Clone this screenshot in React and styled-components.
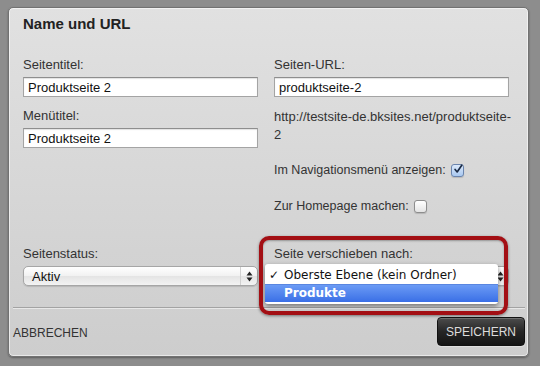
import styled, { createGlobalStyle } from "styled-components";

const GlobalStyle = createGlobalStyle`
  body {
    margin: 0;
    background-color: #8d8d8d;
    font-family: "Liberation Sans", Arial, sans-serif;
  }
`;

export default function App() {
  return (
    <Page>
      <GlobalStyle />
      <Dialog>
        <Body>
          <Title>Name und URL</Title>

          <Columns>
            <Column>
              <Field>
                <Label>Seitentitel:</Label>
                <TextInput defaultValue="Produktseite 2" />
              </Field>
              <Field>
                <Label>Menütitel:</Label>
                <TextInput defaultValue="Produktseite 2" />
              </Field>
            </Column>

            <Column>
              <Field>
                <Label>Seiten-URL:</Label>
                <TextInput defaultValue="produktseite-2" />
              </Field>
              <UrlText>http://testsite-de.bksites.net/produktseite-2</UrlText>
              <CheckRow>
                Im Navigationsmenü anzeigen:
                <CheckBox checked>
                  <svg width="12" height="12" viewBox="0 0 12 12">
                    <path d="M2.5 6.5 L5 9.5 L10.5 1.5" fill="none" stroke="#1a2a44" strokeWidth="2" strokeLinecap="round" strokeLinejoin="round" />
                  </svg>
                </CheckBox>
              </CheckRow>
              <CheckRow>
                Zur Homepage machen:
                <CheckBox />
              </CheckRow>
            </Column>
          </Columns>

          <BottomColumns>
            <Field>
              <Label>Seitenstatus:</Label>
              <Select>
                Aktiv
                <Arrows />
              </Select>
            </Field>

            <MoveField>
              <Label>Seite verschieben nach:</Label>
              <Select>
                <Arrows />
              </Select>
              <Popup>
                <MenuItem>
                  <Check>✓</Check>
                  Oberste Ebene (kein Ordner)
                </MenuItem>
                <MenuItem active>Produkte</MenuItem>
              </Popup>
            </MoveField>
          </BottomColumns>
        </Body>

        <Footer>
          <CancelLink>ABBRECHEN</CancelLink>
          <SaveButton>SPEICHERN</SaveButton>
        </Footer>
      </Dialog>
    </Page>
  );
}

function Arrows() {
  return (
    <ArrowBox>
      <svg width="7" height="11" viewBox="0 0 7 11">
        <path d="M3.5 0.5 L6.5 4.5 L0.5 4.5 Z" fill="#222" />
        <path d="M3.5 10.5 L6.5 6.5 L0.5 6.5 Z" fill="#222" />
      </svg>
    </ArrowBox>
  );
}

const Page = styled.div`
  padding: 7px 0 0 8px;
  height: 359px;
`;

const Dialog = styled.div`
  width: 519px;
  height: 348px;
  display: flex;
  flex-direction: column;
  border: 1px solid #727272;
  border-radius: 5px;
  background: linear-gradient(#e1e1e1, #cdcdcd);
  box-shadow: inset 0 0 0 1px rgba(255, 255, 255, 0.55), 0 1px 2px rgba(0, 0, 0, 0.35);
`;

const Body = styled.div`
  flex: 1;
  padding: 7px 19px 0 14px;
`;

const Title = styled.h1`
  margin: 0;
  font-size: 15px;
  line-height: 18px;
  font-weight: bold;
  color: #222;
`;

const Columns = styled.div`
  display: grid;
  grid-template-columns: 235px 235px;
  column-gap: 16px;
  margin-top: 24px;
`;

const BottomColumns = styled(Columns)`
  margin-top: 31px;
`;

const Column = styled.div`
  display: flex;
  flex-direction: column;
  gap: 11px;
`;

const Field = styled.div`
  display: flex;
  flex-direction: column;
  gap: 4px;
`;

const Label = styled.div`
  font-size: 13px;
  line-height: 16px;
  color: #333;
`;

const TextInput = styled.input`
  box-sizing: border-box;
  width: 100%;
  height: 20px;
  margin: 0;
  padding: 0 4px;
  border: 1px solid #a4a4a4;
  border-top-color: #8e8e8e;
  background: #fff;
  box-shadow: inset 0 1px 1px rgba(0, 0, 0, 0.12);
  font-family: "Liberation Sans", Arial, sans-serif;
  font-size: 13px;
  color: #111;
  outline: none;
`;

const UrlText = styled.div`
  font-size: 13px;
  line-height: 18px;
  color: #333;
  width: 238px;
  margin-right: -3px;
`;

const CheckRow = styled.div`
  display: flex;
  align-items: center;
  gap: 5px;
  height: 18px;
  font-size: 12.5px;
  color: #333;
  margin-top: 6px;

  & + & {
    margin-top: 7px;
  }
`;

const CheckBox = styled.span`
  box-sizing: border-box;
  width: 13px;
  height: 13px;
  display: flex;
  align-items: center;
  justify-content: center;
  border: 1px solid ${(p) => (p.checked ? "#6a84ad" : "#8d8d8d")};
  border-radius: 3px;
  background: ${(p) =>
    p.checked
      ? "linear-gradient(#dbe9fb, #a9c8f0)"
      : "linear-gradient(#ffffff, #e4e4e4)"};
  box-shadow: 0 1px 1px rgba(0, 0, 0, 0.15);

  svg {
    margin-top: -2px;
    margin-left: 1px;
  }
`;

const Select = styled.div`
  box-sizing: border-box;
  position: relative;
  height: 20px;
  padding: 0 0 0 8px;
  display: flex;
  align-items: center;
  border: 1px solid #a6a6a6;
  border-radius: 5px;
  background: linear-gradient(#ffffff, #f1f1f1 50%, #e4e4e4 51%, #f3f3f3);
  box-shadow: 0 1px 1px rgba(0, 0, 0, 0.12);
  font-size: 13px;
  color: #111;
  white-space: nowrap;
  overflow: hidden;
`;

const ArrowBox = styled.span`
  position: absolute;
  right: 0;
  top: 0;
  bottom: 0;
  width: 16px;
  display: flex;
  align-items: center;
  justify-content: center;
  border-left: 1px solid #d0d0d0;
`;

const MoveField = styled(Field)`
  position: relative;

  &::after {
    content: "";
    position: absolute;
    top: -10px;
    left: -15px;
    right: 1px;
    bottom: -29px;
    border: 4px solid #a30f14;
    border-radius: 10px;
    box-shadow: 0 1px 3px rgba(0, 0, 0, 0.45), inset 0 1px 2px rgba(0, 0, 0, 0.3);
    pointer-events: none;
  }
`;

const Popup = styled.div`
  position: absolute;
  top: 18px;
  left: -9px;
  width: 233px;
  padding: 3px 0 2px;
  background: #fff;
  border-radius: 3px;
  box-shadow: 0 2px 5px rgba(0, 0, 0, 0.45);
  font-family: "DejaVu Sans", "Liberation Sans", sans-serif;
  font-size: 12px;
`;

const MenuItem = styled.div`
  position: relative;
  height: 17px;
  line-height: 17px;
  padding-left: 19px;
  color: ${(p) => (p.active ? "#fff" : "#111")};
  background: ${(p) =>
    p.active ? "linear-gradient(#6b9bf5, #3a6fe6)" : "transparent"};
  border-top: ${(p) => (p.active ? "1px solid #5a86e0" : "none")};
  font-weight: ${(p) => (p.active ? "bold" : "normal")};
`;

const Check = styled.span`
  position: absolute;
  left: 4px;
  top: 0;
  font-size: 12px;
  font-weight: bold;
`;

const Footer = styled.div`
  margin: 0 3px 0 4px;
  padding: 9px 0 10px 0;
  display: flex;
  align-items: center;
  justify-content: space-between;
  border-top: 1px solid #a3a3a3;
  box-shadow: inset 0 1px 0 rgba(255, 255, 255, 0.5);
`;

const CancelLink = styled.span`
  font-size: 12px;
  color: #333;
  padding-top: 2px;
`;

const SaveButton = styled.button`
  width: 88px;
  height: 29px;
  border: 1px solid #111;
  border-radius: 4px;
  background: linear-gradient(#4c4c4c, #262626 50%, #141414);
  box-shadow: inset 0 1px 0 rgba(255, 255, 255, 0.2), 0 1px 1px rgba(255, 255, 255, 0.4);
  color: #dcdcdc;
  font-family: "Liberation Sans", Arial, sans-serif;
  font-size: 12px;
  padding: 0;
`;
